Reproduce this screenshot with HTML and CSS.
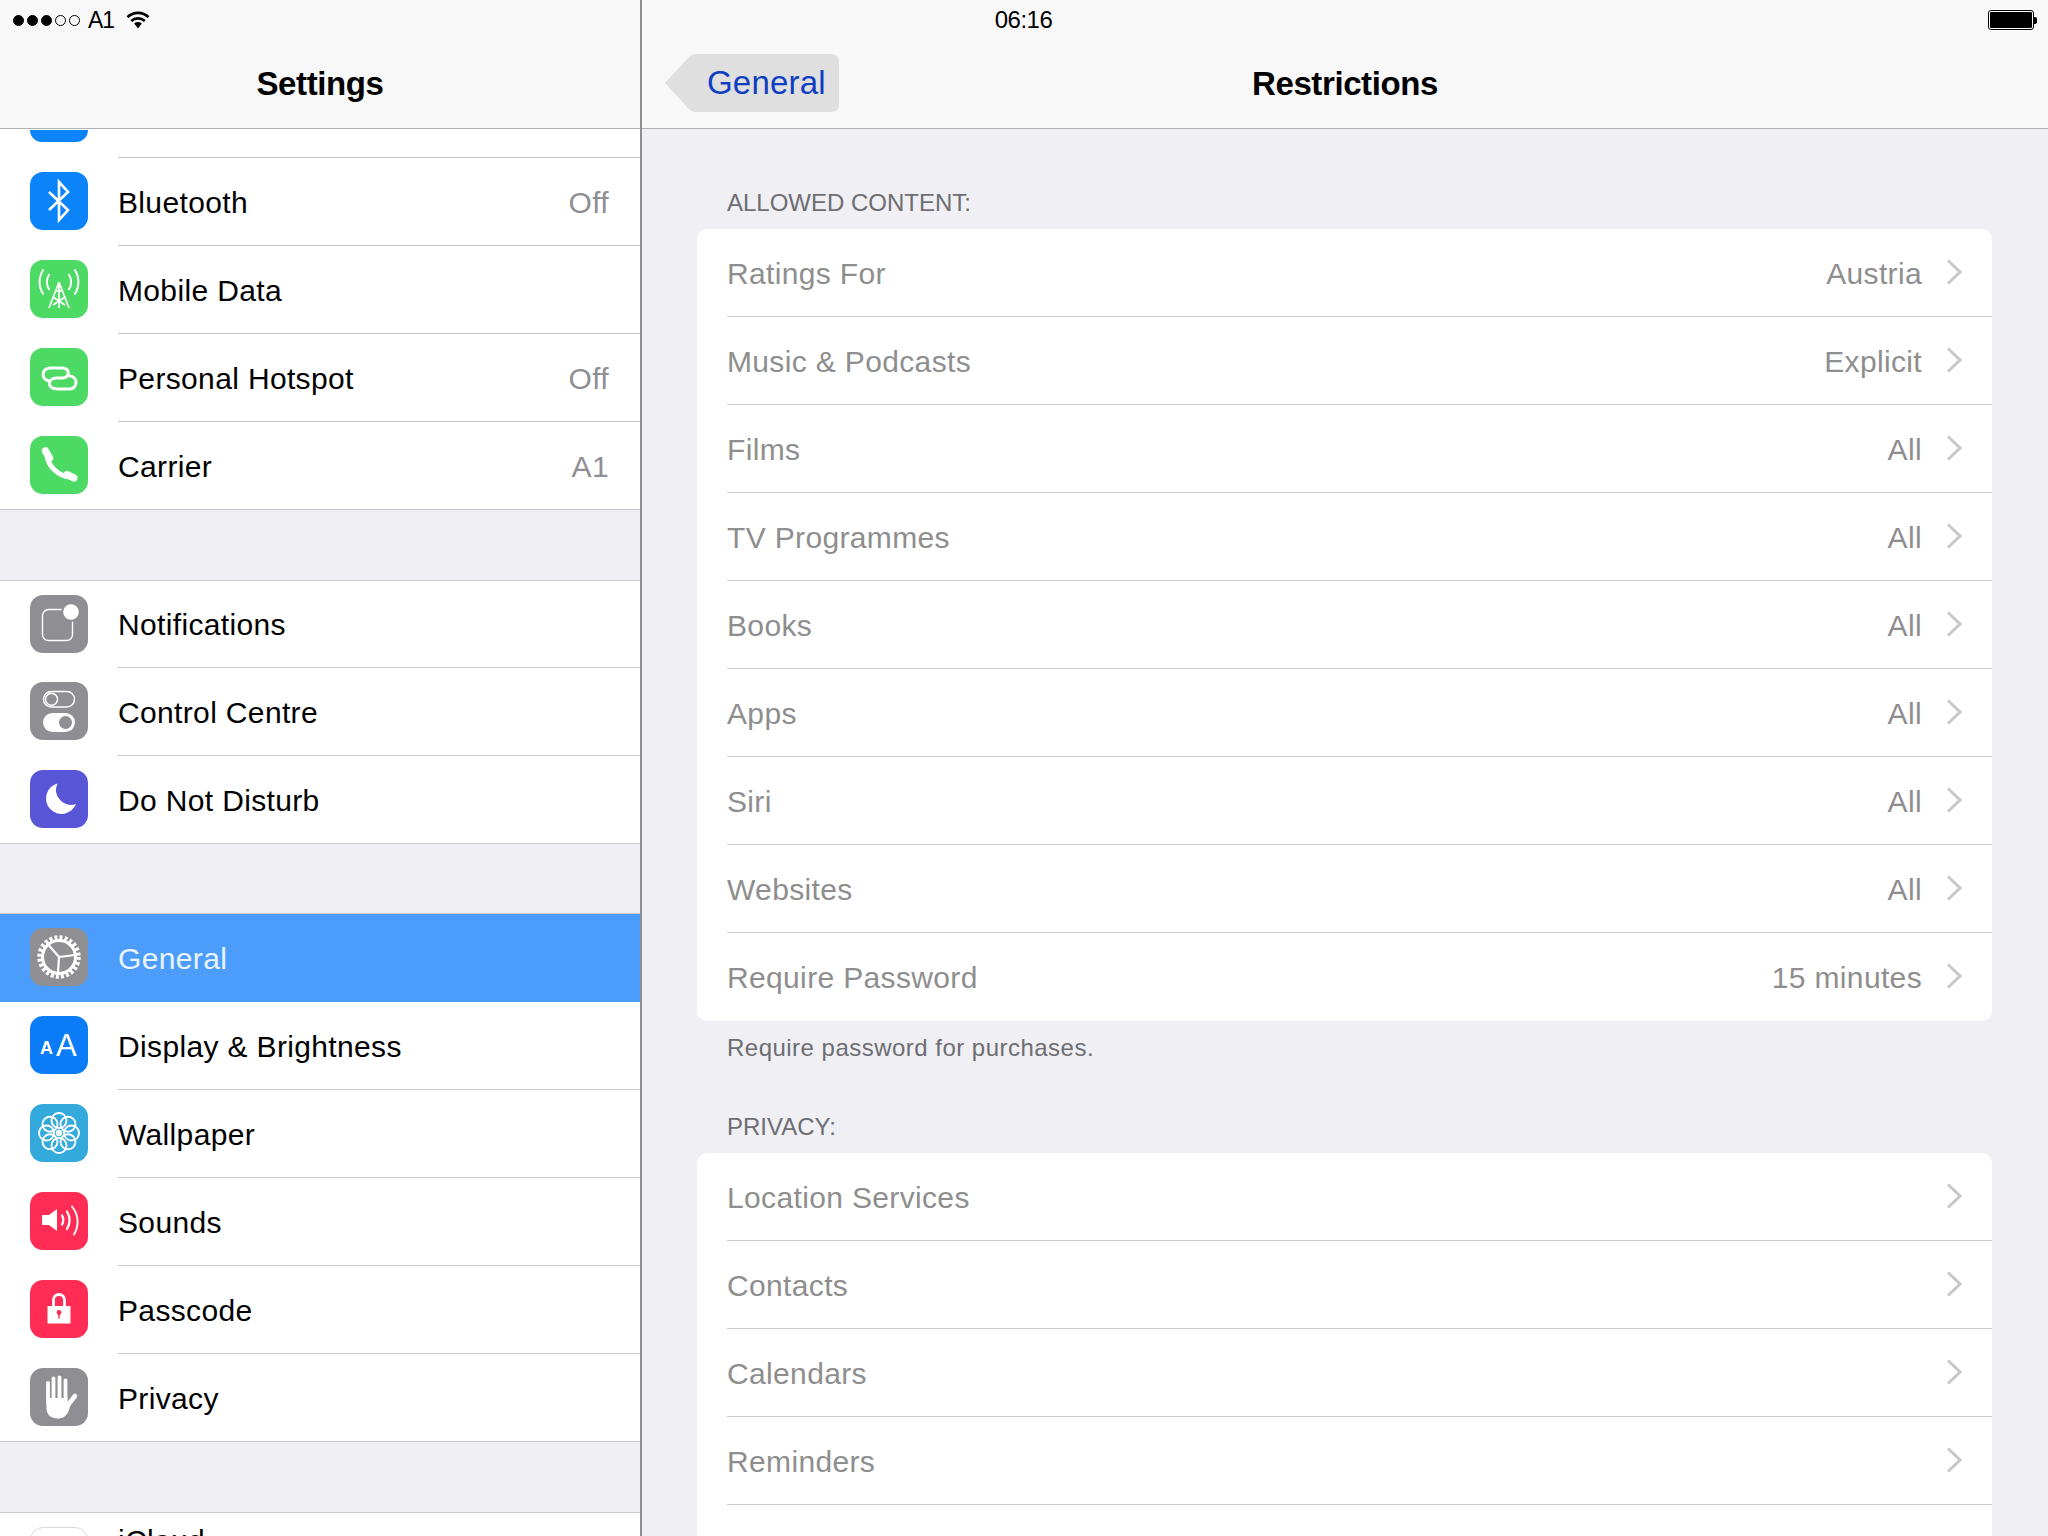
FILE: index.html
```html
<!DOCTYPE html>
<html lang="en">
<head>
<meta charset="utf-8">
<title>Settings – Restrictions</title>
<link rel="stylesheet" href="styles.css">
</head>
<body>
<div class="screen">
  <div class="statusbar">
    <div class="status-left">
      <span class="signal"><i class="dot on"></i><i class="dot on"></i><i class="dot on"></i><i class="dot"></i><i class="dot"></i></span>
      <span class="carrier">A1</span>
      <svg class="wifi" viewBox="0 0 24 18"><g fill="none" stroke="#000" stroke-width="2.600"><path d="M1.500 6.200a15 15 0 0 1 21 0"/><path d="M5.200 10a10 10 0 0 1 13.600 0"/></g><path d="M8.200 12.600a5.600 5.600 0 0 1 7.600 0L12 17.600z" fill="#000"/></svg>
    </div>
    <div class="status-time">06:16</div>
    <div class="status-right">
      <span class="battery"><span class="battery-fill"></span></span><span class="battery-tip"></span>
    </div>
  </div>

  <aside class="sidebar">
    <header class="navbar"><h1 class="nav-title">Settings</h1></header>
    <div class="row-partial"><div class="icon blue"></div><div class="row-partial-body"></div></div>

    <section class="group">
      <div class="row"><div class="icon blue"><svg viewBox="0 0 58 58"><path d="M19 20 38 38 29 48V10l9 10-19 18" fill="none" stroke="#fff" stroke-width="2.600"/></svg></div><div class="row-body"><span>Bluetooth</span><span class="value">Off</span></div></div>
      <div class="row"><div class="icon green"><svg viewBox="0 0 58 58"><g fill="none" stroke="#fff" stroke-width="1.700"><path d="M29 22V48M29 22 19 48M29 22 39 48M23 37 35 45M35 37 23 45M25.500 31H32.500"/><path d="M13.500 9.500a22 22 0 0 0 0 25M44.500 9.500a22 22 0 0 1 0 25" stroke-width="2"/><path d="M19.500 14a13.500 13.500 0 0 0 0 16M38.500 14a13.500 13.500 0 0 1 0 16" stroke-width="2"/></g></svg></div><div class="row-body"><span>Mobile Data</span></div></div>
      <div class="row"><div class="icon green"><svg viewBox="0 0 58 58"><path d="M19 33C11 31 11 21 20 20H33C40 21 40 29 33 30H26C17 31 17 41 28 41H40C48 40 48 29 40 28" fill="none" stroke="#fff" stroke-width="3" stroke-linecap="round"/></svg></div><div class="row-body"><span>Personal Hotspot</span><span class="value">Off</span></div></div>
      <div class="row"><div class="icon green"><svg viewBox="0 0 58 58"><g fill="none" stroke="#fff" stroke-linecap="round"><path d="M17 19C18 30 28 40 40 41" stroke-width="5"/><path d="M15.500 15 19.500 22" stroke-width="7.500"/><path d="M37 38.500 44 42" stroke-width="7"/></g></svg></div><div class="row-body row-last"><span>Carrier</span><span class="value">A1</span></div></div>
    </section>

    <section class="group group-next group-compact">
      <div class="row"><div class="icon gray"><svg viewBox="0 0 58 58"><rect x="12.500" y="14.500" width="30" height="31" rx="6" fill="none" stroke="#fff" stroke-width="1.400"/><circle cx="41" cy="17" r="10" fill="#8e8e93"/><circle cx="41" cy="17" r="7.800" fill="#fff"/></svg></div><div class="row-body"><span>Notifications</span></div></div>
      <div class="row"><div class="icon gray"><svg viewBox="0 0 58 58"><rect x="13.500" y="9.500" width="31" height="15.500" rx="7.750" fill="none" stroke="#fff" stroke-width="1.500"/><circle cx="21.500" cy="17.250" r="6" fill="none" stroke="#fff" stroke-width="1.500"/><rect x="13" y="31" width="32" height="19" rx="9.500" fill="#fff"/><circle cx="35.500" cy="40.500" r="6.500" fill="#8e8e93"/></svg></div><div class="row-body"><span>Control Centre</span></div></div>
      <div class="row"><div class="icon purple"><svg viewBox="0 0 58 58"><path d="M27.500 13.500A15.500 15.500 0 1 0 46 34 15 15 0 0 1 27.500 13.500z" fill="#fff"/></svg></div><div class="row-body row-last"><span>Do Not Disturb</span></div></div>
    </section>

    <section class="group group-next group-tight">
      <div class="row row-selected"><div class="icon gray"><svg viewBox="0 0 58 58"><g fill="none" stroke="#fff"><circle cx="29" cy="29" r="19.500" stroke-width="4.500" stroke-dasharray="3 2.100"/><circle cx="29" cy="29" r="16.500" stroke-width="3"/><path d="M29 29 19 17.500M29 29 45 27M29 29 28 45" stroke-width="2.200"/></g></svg></div><div class="row-body row-noline"><span>General</span></div></div>
      <div class="row"><div class="icon blue2"><svg viewBox="0 0 58 58"><text class="aa-small" x="10" y="37.500">A</text><text class="aa-big" x="26" y="40">A</text></svg></div><div class="row-body"><span>Display &amp; Brightness</span></div></div>
      <div class="row"><div class="icon teal"><svg viewBox="0 0 58 58"><g fill="none" stroke="#fff" stroke-width="1.900"><circle cx="29" cy="16.500" r="7.500"/><circle cx="38" cy="20.200" r="7.500"/><circle cx="41.500" cy="29" r="7.500"/><circle cx="38" cy="37.800" r="7.500"/><circle cx="29" cy="41.500" r="7.500"/><circle cx="20" cy="37.800" r="7.500"/><circle cx="16.500" cy="29" r="7.500"/><circle cx="20" cy="20.200" r="7.500"/></g><circle cx="29" cy="29" r="3.200" fill="#fff"/></svg></div><div class="row-body"><span>Wallpaper</span></div></div>
      <div class="row"><div class="icon red"><svg viewBox="0 0 58 58"><path d="M12 23H19L27 17V39L19 33H12z" fill="#fff"/><g fill="none" stroke="#fff" stroke-linecap="round"><path d="M32 23.500a9 9 0 0 1 0 9" stroke-width="2.200"/><path d="M37 19.500a17 17 0 0 1 0 17.500" stroke-width="2.200"/><path d="M42 14.500a24 24 0 0 1 2 28" stroke-width="1.900"/></g></svg></div><div class="row-body"><span>Sounds</span></div></div>
      <div class="row"><div class="icon red"><svg viewBox="0 0 58 58"><path d="M23.500 27V20a5.500 5.500 0 0 1 11 0V27" fill="none" stroke="#fff" stroke-width="2.800"/><rect x="17.500" y="26" width="23" height="17.500" fill="#fff"/><circle cx="29" cy="32.500" r="2.400" fill="#ff2d55"/><path d="M29 33V38.500" stroke="#ff2d55" stroke-width="1.500"/></svg></div><div class="row-body"><span>Passcode</span></div></div>
      <div class="row"><div class="icon gray"><svg viewBox="0 0 58 58"><g fill="none" stroke="#fff" stroke-width="3.800" stroke-linecap="round"><path d="M18 15V34M23.500 10.500V32M29.500 9.500V32M35.500 12.500V34"/><path d="M38 37 45 28" stroke-width="4.500"/></g><path d="M16.200 30H37.500V35L42 32 39 42C37 48 33 50.500 27.500 50.500 21 50.500 17 47 16.500 41z" fill="#fff"/></svg></div><div class="row-body row-last"><span>Privacy</span></div></div>
    </section>

    <section class="group group-next">
      <div class="row"><div class="icon white"></div><div class="row-body"><span class="label-two-line">iCloud</span></div></div>
    </section>
  </aside>

  <main class="main">
    <header class="navbar navbar-main">
      <div class="back"><svg class="back-shape" viewBox="0 0 174 58"><path d="M0 29 23 4Q26.500 0 31 0H166Q174 0 174 8V50Q174 58 166 58H31Q26.500 58 23 54z" fill="#dfdfe0"/></svg><span class="back-text">General</span></div>
      <h1 class="nav-title">Restrictions</h1>
      <div class="nav-spacer"></div>
    </header>

    <div class="content">
      <h2 class="section-title">ALLOWED CONTENT:</h2>
      <div class="card">
        <div class="cell"><div class="cell-body"><span>Ratings For</span><span class="cell-value">Austria</span><svg class="chev" viewBox="0 0 16 26"><path d="M2 1.500 14 13 2 24.500" fill="none" stroke="#c7c7cc" stroke-width="3"/></svg></div></div>
        <div class="cell"><div class="cell-body"><span>Music &amp; Podcasts</span><span class="cell-value">Explicit</span><svg class="chev" viewBox="0 0 16 26"><path d="M2 1.500 14 13 2 24.500" fill="none" stroke="#c7c7cc" stroke-width="3"/></svg></div></div>
        <div class="cell"><div class="cell-body"><span>Films</span><span class="cell-value">All</span><svg class="chev" viewBox="0 0 16 26"><path d="M2 1.500 14 13 2 24.500" fill="none" stroke="#c7c7cc" stroke-width="3"/></svg></div></div>
        <div class="cell"><div class="cell-body"><span>TV Programmes</span><span class="cell-value">All</span><svg class="chev" viewBox="0 0 16 26"><path d="M2 1.500 14 13 2 24.500" fill="none" stroke="#c7c7cc" stroke-width="3"/></svg></div></div>
        <div class="cell"><div class="cell-body"><span>Books</span><span class="cell-value">All</span><svg class="chev" viewBox="0 0 16 26"><path d="M2 1.500 14 13 2 24.500" fill="none" stroke="#c7c7cc" stroke-width="3"/></svg></div></div>
        <div class="cell"><div class="cell-body"><span>Apps</span><span class="cell-value">All</span><svg class="chev" viewBox="0 0 16 26"><path d="M2 1.500 14 13 2 24.500" fill="none" stroke="#c7c7cc" stroke-width="3"/></svg></div></div>
        <div class="cell"><div class="cell-body"><span>Siri</span><span class="cell-value">All</span><svg class="chev" viewBox="0 0 16 26"><path d="M2 1.500 14 13 2 24.500" fill="none" stroke="#c7c7cc" stroke-width="3"/></svg></div></div>
        <div class="cell"><div class="cell-body"><span>Websites</span><span class="cell-value">All</span><svg class="chev" viewBox="0 0 16 26"><path d="M2 1.500 14 13 2 24.500" fill="none" stroke="#c7c7cc" stroke-width="3"/></svg></div></div>
        <div class="cell"><div class="cell-body cell-last"><span>Require Password</span><span class="cell-value">15 minutes</span><svg class="chev" viewBox="0 0 16 26"><path d="M2 1.500 14 13 2 24.500" fill="none" stroke="#c7c7cc" stroke-width="3"/></svg></div></div>
      </div>
      <p class="caption">Require password for purchases.</p>
      <h2 class="section-title section-next">PRIVACY:</h2>
      <div class="card">
        <div class="cell"><div class="cell-body"><span>Location Services</span><svg class="chev" viewBox="0 0 16 26"><path d="M2 1.500 14 13 2 24.500" fill="none" stroke="#c7c7cc" stroke-width="3"/></svg></div></div>
        <div class="cell"><div class="cell-body"><span>Contacts</span><svg class="chev" viewBox="0 0 16 26"><path d="M2 1.500 14 13 2 24.500" fill="none" stroke="#c7c7cc" stroke-width="3"/></svg></div></div>
        <div class="cell"><div class="cell-body"><span>Calendars</span><svg class="chev" viewBox="0 0 16 26"><path d="M2 1.500 14 13 2 24.500" fill="none" stroke="#c7c7cc" stroke-width="3"/></svg></div></div>
        <div class="cell"><div class="cell-body"><span>Reminders</span><svg class="chev" viewBox="0 0 16 26"><path d="M2 1.500 14 13 2 24.500" fill="none" stroke="#c7c7cc" stroke-width="3"/></svg></div></div>
        <div class="cell"><div class="cell-body cell-last"><span></span><svg class="chev" viewBox="0 0 16 26"><path d="M2 1.500 14 13 2 24.500" fill="none" stroke="#c7c7cc" stroke-width="3"/></svg></div></div>
      </div>
    </div>
  </main>
</div>
</body>
</html>
```

FILE: styles.css
```css
* { box-sizing: border-box; }
html, body { margin: 0; padding: 0; height: 100%; overflow: hidden; }
body { font-family: "Liberation Sans", Arial, sans-serif; color: #000; background: #efeff4; }

.screen { position: relative; display: flex; width: 2048px; height: 1536px; overflow: hidden; }

/* status bar overlays both navigation bars */
.statusbar { position: absolute; top: 0; left: 0; right: 0; height: 40px; display: grid; grid-template-columns: 1fr auto 1fr; align-items: center; padding: 0 11px 0 13px; font-size: 24px; }
.status-left { display: flex; align-items: center; }
.signal { display: flex; gap: 3px; margin-right: 8px; }
.dot { width: 11px; height: 11px; border-radius: 50%; border: 1px solid #000; }
.dot.on { background: #000; }
.carrier { font-size: 23px; letter-spacing: -1.2px; margin-right: 12px; }
.wifi { width: 24px; height: 18px; }
.status-time { text-align: center; font-size: 24px; letter-spacing: -0.5px; margin-left: -3px; }
.status-right { display: flex; justify-content: flex-end; align-items: center; }
.battery { width: 46px; height: 20px; border: 1px solid #000; border-radius: 3px; padding: 1px; background: #fff; }
.battery-fill { display: block; width: 100%; height: 100%; background: #000; border-radius: 1px; }
.battery-tip { width: 3px; height: 7px; background: #000; border-radius: 0 2px 2px 0; }

.navbar { height: 129px; background: #f8f8f8; border-bottom: 1px solid #b2b2b2; display: flex; align-items: flex-end; justify-content: center; padding-bottom: 23px; }
.nav-title { margin: 0; font-size: 33px; line-height: 42px; font-weight: bold; letter-spacing: -0.4px; }

/* sidebar */
.sidebar { width: 642px; flex: none; background: #efeff4; border-right: 2px solid #8f8f8f; }
.row-partial { height: 29px; background: #fff; display: flex; align-items: flex-end; padding-left: 30px; overflow: hidden; }
.row-partial .icon { margin-bottom: 16px; margin-right: 30px; border-radius: 0 0 13px 13px; height: 12px; }
.row-partial-body { flex: 1; height: 1px; background: #c8c7cc; }

.group { background: #fff; border-bottom: 1px solid #c8c7cc; }
.group-next { margin-top: 70px; border-top: 1px solid #c8c7cc; }
.group-tight { margin-top: 69px; }
.row { display: flex; height: 88px; padding-left: 30px; align-items: stretch; font-size: 30px; letter-spacing: 0.35px; }
.row:last-child { height: 87px; }
.group-compact .row:first-child { height: 87px; }
.row .icon { align-self: center; margin-bottom: 2px; }
.icon { flex: none; width: 58px; height: 58px; margin-right: 30px; border-radius: 13px; overflow: hidden; }
.icon svg { display: block; width: 58px; height: 58px; }
.row-body { flex: 1; min-width: 0; display: flex; align-items: center; justify-content: space-between; padding: 2px 31px 0 0; border-bottom: 1px solid #c8c7cc; }
.row-last, .row-noline { border-bottom: 0; }
.value { color: #8e8e93; }
.row-selected { background: #4c9dfb; color: #eaf4ff; }
.blue { background: #0a84f8; }
.blue2 { background: #0a7cf8; }
.green { background: #4cd964; }
.gray { background: #8e8e93; }
.purple { background: #5856d6; }
.teal { background: #34aadc; }
.red { background: #ff2d55; }
.white { background: #fff; border: 1px solid #d9d9d9; }
.aa-small { font-size: 18px; fill: #fff; font-weight: bold; font-family: "Liberation Sans", sans-serif; }
.aa-big { font-size: 31px; fill: #fff; font-family: "Liberation Sans", sans-serif; }
.label-two-line { padding-bottom: 32px; }

/* main column */
.main { flex: 1; min-width: 0; }
.navbar-main { display: grid; grid-template-columns: 1fr auto 1fr; align-items: end; padding-left: 23px; padding-right: 23px; }
.back { position: relative; width: 174px; height: 58px; display: flex; align-items: center; padding-left: 42px; margin-bottom: -7px; }
.back-shape { position: absolute; left: 0; top: 0; width: 174px; height: 58px; }
.back-text { position: relative; font-size: 33px; letter-spacing: 0.2px; color: #0f3fc0; }
.nav-spacer { min-width: 0; }

.content { padding: 59px 56px 0 55px; }
.section-title { margin: 0 0 11px; padding-left: 30px; font-size: 24px; line-height: 30px; font-weight: normal; color: #6d6d72; }
.section-next { margin-top: 49px; }
.card { background: #fff; border-radius: 10px; }
.cell { height: 88px; padding-left: 30px; font-size: 30px; letter-spacing: 0.35px; color: #8e8e8e; }
.cell-body { height: 100%; display: flex; align-items: center; padding: 2px 30px 0 0; border-bottom: 1px solid #c8c7cc; }
.cell-body > span:first-child { flex: 1; }
.cell-last { border-bottom: 0; }
.cell-value { margin-right: 24px; color: #8e8e8e; }
.chev { width: 16px; height: 26px; flex: none; margin-top: -4px; }
.caption { margin: 12px 0 0; padding-left: 30px; font-size: 24px; line-height: 30px; letter-spacing: 0.48px; color: #6d6d72; }
```
